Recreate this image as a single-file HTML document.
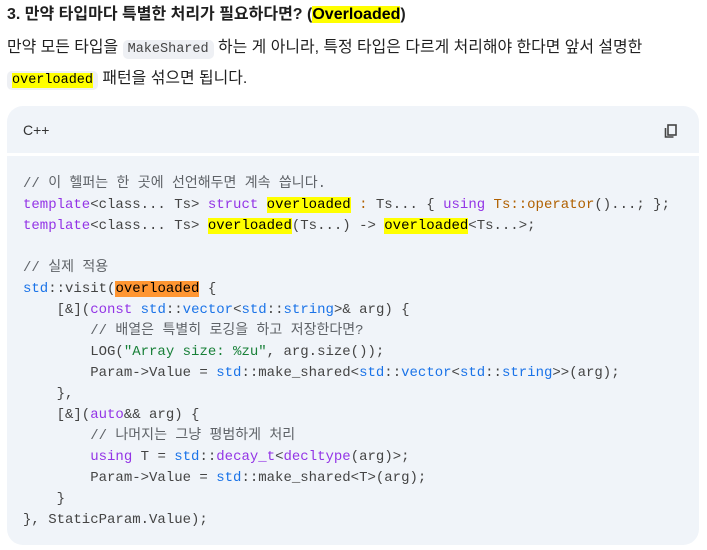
<!DOCTYPE html>
<html><head><meta charset="utf-8"><style>
body{margin:0;background:#fff;width:707px;height:550px;overflow:hidden;font-family:"Liberation Sans","Noto Sans CJK KR",sans-serif;color:#1f1f1f}
.t{position:absolute;left:7px;top:4px;font-size:16px;font-weight:bold;line-height:22px}
.p{position:absolute;left:7px;top:33px;font-size:15.9px;line-height:29px;width:695px}
.ic{font-family:"Liberation Mono","Noto Sans CJK KR",monospace;font-size:13.5px;background:#eef0f4;padding:2px 5px;border-radius:5px;color:#444}
.hl{background:#ffff00;color:#000}
.or{background:#ff9632;color:#000}
.box{position:absolute;left:7px;top:106px;width:692px;height:439px;background:#f0f4f9;border-radius:16px;overflow:hidden}
.hd{height:47px;border-bottom:3px solid #fff;position:relative}
.hd span{position:absolute;left:16px;top:16px;font-size:14px;color:#333}
pre{margin:0;position:absolute;left:16px;top:68px;font-family:"Liberation Mono","Noto Sans CJK KR",monospace;font-size:14px;line-height:21px;color:#444}
.c{color:#5f6368}.k{color:#9334e6}.b{color:#1a73e8}.br{color:#b06000}.g{color:#188038}
</style></head><body>
<div class="t">3. 만약 타입마다 특별한 처리가 필요하다면? (<span class="hl">Overloaded</span>)</div>
<div class="p">만약 모든 타입을 <span class="ic">MakeShared</span> 하는 게 아니라, 특정 타입은 다르게 처리해야 한다면 앞서 설명한 <span class="ic"><span class="hl">overloaded</span></span> 패턴을 섞으면 됩니다.</div>
<div class="box">
<div class="hd"><span>C++</span>
<svg style="position:absolute;left:657px;top:18px" width="14" height="15" viewBox="0 0 14 15"><rect x="4" y="1" width="8" height="10" fill="none" stroke="#444" stroke-width="1.6"/><path d="M1.5 4v9h8" fill="none" stroke="#444" stroke-width="1.6"/></svg></div>
<pre><span class="c">// 이 헬퍼는 한 곳에 선언해두면 계속 씁니다.</span>
<span class="k">template</span>&lt;class... Ts&gt; <span class="k">struct</span> <span class="hl">overloaded</span> <span class="br">:</span> Ts... { <span class="k">using</span> <span class="br">Ts::operator</span>()...; };
<span class="k">template</span>&lt;class... Ts&gt; <span class="hl">overloaded</span>(Ts...) -&gt; <span class="hl">overloaded</span>&lt;Ts...&gt;;

<span class="c">// 실제 적용</span>
<span class="b">std</span>::visit(<span class="or">overloaded</span> {
    [&amp;](<span class="k">const</span> <span class="b">std</span>::<span class="b">vector</span>&lt;<span class="b">std</span>::<span class="b">string</span>&gt;&amp; arg) {
        <span class="c">// 배열은 특별히 로깅을 하고 저장한다면?</span>
        LOG(<span class="g">"Array size: %zu"</span>, arg.size());
        Param-&gt;Value = <span class="b">std</span>::make_shared&lt;<span class="b">std</span>::<span class="b">vector</span>&lt;<span class="b">std</span>::<span class="b">string</span>&gt;&gt;(arg);
    },
    [&amp;](<span class="k">auto</span>&amp;&amp; arg) {
        <span class="c">// 나머지는 그냥 평범하게 처리</span>
        <span class="k">using</span> T = <span class="b">std</span>::<span class="k">decay_t</span>&lt;<span class="k">decltype</span>(arg)&gt;;
        Param-&gt;Value = <span class="b">std</span>::make_shared&lt;T&gt;(arg);
    }
}, StaticParam.Value);</pre>
</div>
</body></html>
